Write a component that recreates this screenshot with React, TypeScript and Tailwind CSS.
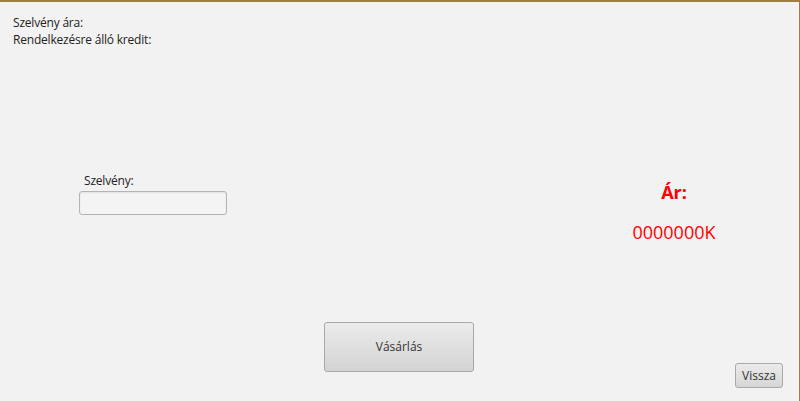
export default function App() {
  return (
    <div className="w-[800px] h-[401px] bg-[#f2f2f2] border-t-2 border-r border-[#9c7f45] flex flex-col text-[#222] font-['Open_Sans',sans-serif] text-[12px] overflow-hidden">
      <div className="pl-[13px] pt-[12px] leading-[17px] tracking-[-0.2px]">
        <div>Szelvény ára:</div>
        <div>Rendelkezésre álló kredit:</div>
      </div>

      <div className="flex mt-[125px]">
        <div className="ml-[79px] w-[148px] flex flex-col">
          <span className="pl-[5px] leading-[16px] tracking-[-0.2px]">Szelvény:</span>
          <input
            type="text"
            className="mt-[2px] h-[24px] w-[148px] rounded-[3px] border border-[#b4b4b4] bg-[#f4f4f4] shadow-[inset_0_1px_2px_rgba(0,0,0,0.08)] outline-none"
          />
        </div>
        <div className="ml-auto mr-[25px] w-[200px] flex flex-col items-center text-[#ff0000] pt-[8px]">
          <span className="font-bold text-[18px] leading-[22px]">Ár:</span>
          <span className="mt-[17px] text-[18px] leading-[24px]">0000000K</span>
        </div>
      </div>

      <div className="mt-auto flex items-end pb-[13px]">
        <button className="ml-[324px] mb-[16px] w-[150px] h-[50px] rounded-[3px] border border-[#a9a9a9] bg-gradient-to-b from-[#ebebeb] to-[#d3d3d3] text-[12px] text-[#333]">
          Vásárlás
        </button>
        <button className="ml-auto mr-[16px] w-[48px] h-[25px] rounded-[3px] border border-[#a9a9a9] bg-gradient-to-b from-[#ebebeb] to-[#d6d6d6] text-[12px] text-[#333]">
          Vissza
        </button>
      </div>
    </div>
  );
}
